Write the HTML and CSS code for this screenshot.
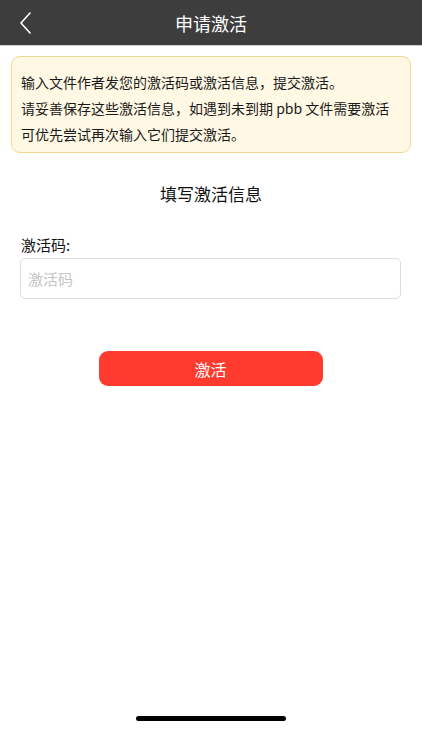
FILE: index.html
```
<!DOCTYPE html>
<html lang="zh-CN">
<head>
<meta charset="utf-8">
<title>申请激活</title>
<link rel="stylesheet" href="styles.css">
</head>
<body>
<div class="screen">
  <header class="nav">
    <svg class="back" width="14" height="22" viewBox="0 0 14 22"><path d="M11 1 L2 11 L11 21" fill="none" stroke="#ffffff" stroke-width="1.6" stroke-linecap="round" stroke-linejoin="round"/></svg>
    <h1 class="nav-title">申请激活</h1>
  </header>
  <main class="content">
    <div class="notice">
      <p>输入文件作者发您的激活码或激活信息，提交激活。</p>
      <p>请妥善保存这些激活信息，如遇到未到期 pbb 文件需要激活</p>
      <p>可优先尝试再次输入它们提交激活。</p>
    </div>
    <h2 class="section-title">填写激活信息</h2>
    <label class="field-label" for="code">激活码:</label>
    <input class="field-input" id="code" type="text" placeholder="激活码">
    <div class="actions">
      <button class="btn" type="button">激活</button>
    </div>
  </main>
  <div class="home-indicator"></div>
</div>
</body>
</html>
```
FILE: styles.css
```
* { box-sizing: border-box; }
html, body { margin: 0; padding: 0; }
body {
  font-family: "Noto Sans CJK SC", "Noto Sans", sans-serif;
  background: #ffffff;
  color: #111;
}
.screen {
  width: 422px;
  height: 750px;
  position: relative;
  display: flex;
  flex-direction: column;
}
.nav {
  height: 46px;
  background: #3d3d3d;
  display: flex;
  align-items: center;
  justify-content: center;
  position: relative;
  border-bottom: 1px solid #d0d0d0;
}
.back {
  position: absolute;
  left: 19px;
  top: 12px;
}
.nav-title {
  margin: 0;
  font-size: 18px;
  font-weight: 400;
  color: #ffffff;
  line-height: 1;
}
.content {
  display: flex;
  flex-direction: column;
  padding: 10px 11px 0 11px;
}
.notice {
  background: #fff8e4;
  border: 1px solid #f1d890;
  border-radius: 9px;
  padding: 12px 9px 5px 9px;
}
.notice p {
  margin: 0;
  font-size: 14px;
  line-height: 26px;
  color: #1a1a1a;
}
.section-title {
  margin: 28px 0 0 0;
  text-align: center;
  font-size: 17px;
  font-weight: 400;
  line-height: 26px;
  color: #111;
}
.field-label {
  margin: 27px 0 0 10px;
  font-size: 15px;
  line-height: 22px;
  color: #111;
}
.field-input {
  margin: 2px 10px 0 9px;
  height: 41px;
  border: 1px solid #dcdcdc;
  border-radius: 5px;
  padding: 0 7px;
  font-family: "Noto Sans CJK SC", "Noto Sans", sans-serif;
  font-size: 15px;
  color: #111;
  outline: none;
}
.field-input::placeholder { color: #c4c4c4; }
.actions {
  display: flex;
  justify-content: center;
  margin-top: 52px;
}
.btn {
  width: 224px;
  height: 35px;
  background: #ff3b30;
  border: none;
  border-radius: 9px;
  color: #ffffff;
  font-family: "Noto Sans CJK SC", "Noto Sans", sans-serif;
  font-size: 16px;
  margin-left: -1px;
}
.home-indicator {
  position: absolute;
  left: 136px;
  top: 716px;
  width: 150px;
  height: 5px;
  border-radius: 3px;
  background: #000;
}
```
